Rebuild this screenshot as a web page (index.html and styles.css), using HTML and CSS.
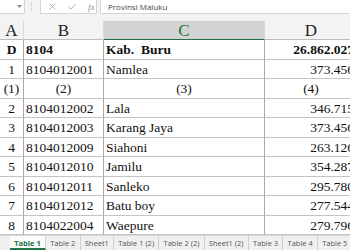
FILE: index.html
```html
<!DOCTYPE html>
<html lang="id">
<head>
  <meta charset="UTF-8">
  <title>Table 1</title>
  <link rel="stylesheet" href="styles.css">
</head>
<body>
  <div class="window">
    <div class="formula-bar">
      <div class="name-box">
        <svg class="drop" width="5" height="3" viewBox="0 0 5 3"><path d="M0 0h5L2.5 3z" fill="#8a8a8a"/></svg>
      </div>
      <div class="grip"></div>
      <div class="actions">
        <svg width="7" height="7" viewBox="0 0 7 7"><path d="M0.5 0.5l6 6M6.5 0.5l-6 6" stroke="#b4b4b4" stroke-width="1"/></svg>
        <svg width="8" height="7" viewBox="0 0 8 7"><path d="M0.5 3.8l2.4 2.5L7.5 0.7" stroke="#b4b4b4" stroke-width="1" fill="none"/></svg>
        <span class="fx">fx</span>
      </div>
      <div class="formula">Provinsi Maluku</div>
    </div>

    <div class="sheet">
      <div class="grid">
        <div class="hd">A</div>
        <div class="hd">B</div>
        <div class="hd selected">C</div>
        <div class="hd">D</div>

        <div class="c ctr b">D</div>
        <div class="c b">8104</div>
        <div class="c b">Kab.&nbsp; Buru</div>
        <div class="c num b">26.862.027</div>

        <div class="c ctr">1</div>
        <div class="c">8104012001</div>
        <div class="c">Namlea</div>
        <div class="c num">373.456</div>

        <div class="c ctr">(1)</div>
        <div class="c ctr">(2)</div>
        <div class="c ctr">(3)</div>
        <div class="c ctr">(4)</div>

        <div class="c ctr">2</div>
        <div class="c">8104012002</div>
        <div class="c">Lala</div>
        <div class="c num">346.715</div>

        <div class="c ctr">3</div>
        <div class="c">8104012003</div>
        <div class="c">Karang Jaya</div>
        <div class="c num">373.456</div>

        <div class="c ctr">4</div>
        <div class="c">8104012009</div>
        <div class="c">Siahoni</div>
        <div class="c num">263.126</div>

        <div class="c ctr">5</div>
        <div class="c">8104012010</div>
        <div class="c">Jamilu</div>
        <div class="c num">354.287</div>

        <div class="c ctr">6</div>
        <div class="c">8104012011</div>
        <div class="c">Sanleko</div>
        <div class="c num">295.780</div>

        <div class="c ctr">7</div>
        <div class="c">8104012012</div>
        <div class="c">Batu boy</div>
        <div class="c num">277.544</div>

        <div class="c ctr">8</div>
        <div class="c">8104022004</div>
        <div class="c">Waepure</div>
        <div class="c num">279.796</div>
      </div>
    </div>

    <div class="tabs">
      <span class="tab active">Table 1</span>
      <span class="tab">Table 2</span>
      <span class="tab">Sheet1</span>
      <span class="tab">Table 1 (2)</span>
      <span class="tab">Table 2 (2)</span>
      <span class="tab">Sheet1 (2)</span>
      <span class="tab">Table 3</span>
      <span class="tab">Table 4</span>
      <span class="tab">Table 5</span>
    </div>
  </div>
</body>
</html>
```

FILE: styles.css
```css
body {
  margin: 0;
  background: #ffffff;
  font-family: 'Liberation Serif', 'Times New Roman', serif;
}
.window {
  width: 350px;
  height: 250px;
  overflow: hidden;
  display: flex;
  flex-direction: column;
  background: #f3f3f3;
}

/* formula bar */
.formula-bar {
  height: 21px;
  flex: none;
  display: flex;
  align-items: flex-start;
  background: #f3f3f3;
}
.name-box {
  width: 25px;
  height: 14px;
  box-sizing: border-box;
  background: #fff;
  border: 1px solid #d6d6d6;
  border-top: none;
  border-left: none;
  display: flex;
  align-items: center;
  justify-content: flex-end;
  padding-right: 2px;
}
.grip {
  width: 1px;
  height: 8px;
  margin: 3px 7px 0 6px;
  border-left: 1px dotted #c8c8c8;
}
.actions {
  width: 57px;
  height: 14px;
  box-sizing: border-box;
  background: #fff;
  border: 1px solid #d6d6d6;
  border-top: none;
  display: flex;
  align-items: center;
  gap: 12px;
  padding-left: 8px;
}
.fx {
  font-family: 'Liberation Serif', serif;
  font-style: italic;
  font-size: 9px;
  color: #8a8a8a;
}
.formula {
  flex: 1;
  height: 14px;
  box-sizing: border-box;
  margin-left: 3px;
  background: #fff;
  border: 1px solid #d6d6d6;
  border-top: none;
  border-right: none;
  padding-left: 7px;
  font-family: 'Open Sans', 'Noto Sans', sans-serif;
  font-size: 8px;
  line-height: 13px;
  color: #444;
}

/* sheet */
.sheet {
  flex: 1;
  overflow: hidden;
  background: #fff;
}
.grid {
  display: grid;
  grid-template-columns: 24px 80px 161px 93px;
  grid-template-rows: 19px;
  grid-auto-rows: 19.5px;
  width: 358px;
}
.hd {
  background: #f3f3f3;
  border-right: 1px solid #d8d8d8;
  border-bottom: 1px solid #bdbdbd;
  font-size: 17px;
  line-height: 19px;
  text-align: center;
  color: #222;
}
.hd.selected {
  background: #d3d3d3;
  color: #217346;
  border-bottom-color: #217346;
}
.c {
  border-right: 1px solid #a8a8a8;
  border-bottom: 1px solid #c4c4c4;
  font-size: 13.5px;
  line-height: 19px;
  padding: 0 2px;
  white-space: nowrap;
  overflow: hidden;
  color: #111;
}
.ctr {
  text-align: center;
}
.num {
  text-align: right;
  padding-right: 3px;
}
.b {
  font-weight: bold;
}

/* sheet tabs */
.tabs {
  height: 15px;
  flex: none;
  display: flex;
  align-items: center;
  padding-left: 10px;
  background: #f0f0f0;
  border-top: 1px solid #dadada;
  box-sizing: border-box;
  font-family: 'Open Sans', 'Noto Sans', sans-serif;
  font-size: 7.5px;
  color: #555;
  white-space: nowrap;
}
.tab {
  padding: 0 4.2px;
  height: 14px;
  line-height: 14px;
  border-right: 1px solid #cfcfcf;
  box-sizing: border-box;
}
.tab.active {
  color: #217346;
  font-weight: bold;
  border-bottom: 2px solid #217346;
  background: #fbfbfb;
}
```
